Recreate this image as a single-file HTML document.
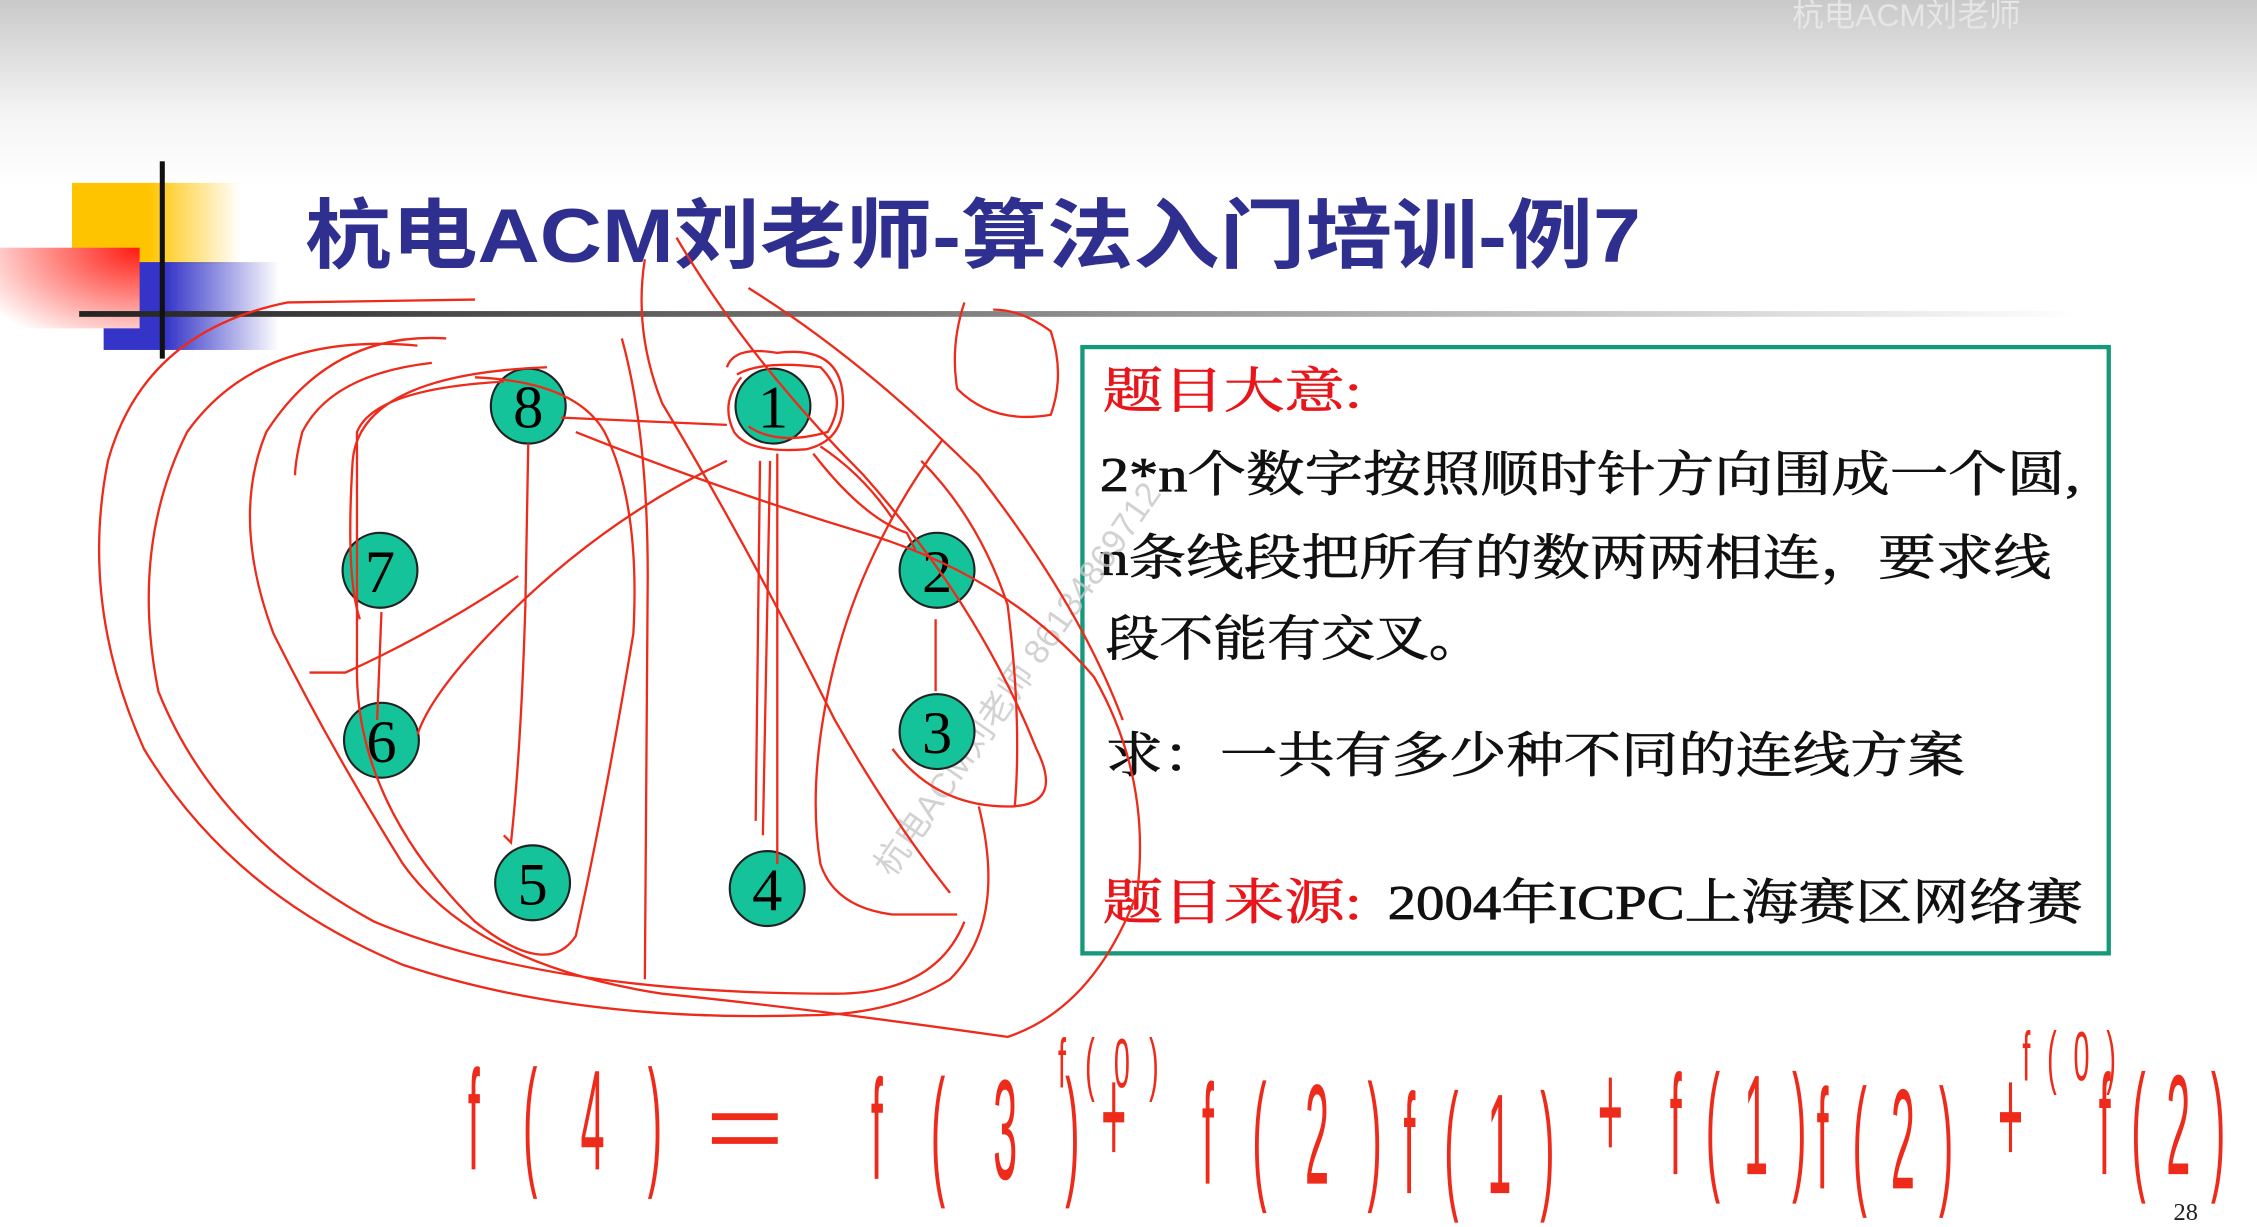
<!DOCTYPE html>
<html><head><meta charset="utf-8"><style>
html,body{margin:0;padding:0;width:2257px;height:1227px;overflow:hidden;background:#fff}
svg{display:block}
</style></head><body>
<svg width="2257" height="1227" viewBox="0 0 1568 852" preserveAspectRatio="none" xmlns="http://www.w3.org/2000/svg">
<defs>
<linearGradient id="bg" x1="0" y1="0" x2="0" y2="1">
<stop offset="0" stop-color="#c9c9c9"/><stop offset="0.6" stop-color="#f4f4f4"/><stop offset="1" stop-color="#ffffff"/></linearGradient>
<linearGradient id="ln" x1="0" y1="0" x2="1" y2="0">
<stop offset="0" stop-color="#222"/><stop offset="0.4" stop-color="#777"/><stop offset="1" stop-color="#fff"/></linearGradient>
<linearGradient id="bl" x1="0" y1="0" x2="1" y2="0">
<stop offset="0.35" stop-color="#3434c8"/><stop offset="1" stop-color="#3434c8" stop-opacity="0"/></linearGradient>
<linearGradient id="ye" x1="0" y1="0" x2="1" y2="0">
<stop offset="0.45" stop-color="#ffc400"/><stop offset="1" stop-color="#ffc400" stop-opacity="0"/></linearGradient>
<radialGradient id="rd" cx="1" cy="0" r="1.3" fx="1" fy="0">
<stop offset="0" stop-color="#ff1a10"/><stop offset="1" stop-color="#ffffff"/></radialGradient>
</defs>
<rect width="1568" height="130" fill="url(#bg)"/>
<text x="1245" y="18" font-family="Liberation Sans,Noto Sans CJK SC,sans-serif" font-size="22" fill="#e6e6e6">杭电ACM刘老师</text>
<rect x="50" y="127" width="117" height="56" fill="url(#ye)"/>
<rect x="72" y="182" width="122" height="61" fill="url(#bl)"/>
<rect x="0" y="172" width="97" height="56" fill="url(#rd)"/>
<rect x="55" y="216" width="1390" height="4" fill="url(#ln)"/>
<rect x="111" y="112" width="3.5" height="137" fill="#111"/>
<text x="212" y="182" font-family="Liberation Sans,Noto Sans CJK SC,sans-serif" font-weight="bold" font-size="53" fill="#2f2f90" textLength="928" lengthAdjust="spacingAndGlyphs">杭电ACM刘老师-算法入门培训-例7</text>
<rect x="752" y="241" width="713" height="421" fill="#fff" stroke="#16987a" stroke-width="3"/>
<g font-family="Liberation Serif,Noto Serif CJK SC,serif" font-size="34" stroke-width="0.5">
<text x="766" y="283" fill="#e8161a" stroke="#e8161a" textLength="180" lengthAdjust="spacingAndGlyphs">题目大意:</text>
<text x="764" y="341" fill="#111" stroke="#111" textLength="681" lengthAdjust="spacingAndGlyphs">2*n个数字按照顺时针方向围成一个圆,</text>
<text x="764" y="399" fill="#111" stroke="#111" textLength="661" lengthAdjust="spacingAndGlyphs">n条线段把所有的数两两相连，要求线</text>
<text x="768" y="455" fill="#111" stroke="#111" textLength="262" lengthAdjust="spacingAndGlyphs">段不能有交叉。</text>
<text x="768" y="536" fill="#111" stroke="#111" textLength="597" lengthAdjust="spacingAndGlyphs">求：一共有多少种不同的连线方案</text>
<text x="766" y="638" fill="#e8161a" stroke="#e8161a" textLength="180" lengthAdjust="spacingAndGlyphs">题目来源:</text>
<text x="964" y="638" fill="#111" stroke="#111" textLength="483" lengthAdjust="spacingAndGlyphs">2004年ICPC上海赛区网络赛</text>
</g>
<text x="0" y="0" transform="translate(620,610) rotate(-55)" font-family="Liberation Sans,Noto Sans CJK SC,sans-serif" font-size="24" fill="#c8c8c8" opacity="0.8">杭电ACM刘老师 86134869712</text>
<g stroke="#222" stroke-width="1.5" fill="#14c39a">
<circle cx="367" cy="282" r="26"/><circle cx="537" cy="282" r="26"/>
<circle cx="264" cy="396" r="26"/><circle cx="651" cy="396" r="26"/>
<circle cx="265" cy="514" r="26"/><circle cx="651" cy="508" r="26"/>
<circle cx="370" cy="613" r="26"/><circle cx="533" cy="617" r="26"/>
</g>
<g font-family="Liberation Serif,serif" font-size="42" fill="#000" text-anchor="middle">
<text x="367" y="297">8</text><text x="537" y="297">1</text>
<text x="264" y="411">7</text><text x="651" y="411">2</text>
<text x="265" y="529">6</text><text x="651" y="523">3</text>
<text x="370" y="628">5</text><text x="533" y="632">4</text>
</g>
<g fill="none" stroke="#ee2a1a" stroke-width="1.6">
<path d="M330 208 L200 210 Q100 230 75 320 Q55 420 100 520 Q160 620 280 670 Q400 710 560 705 Q620 705 660 680 Q700 640 680 560"/>
<path d="M290 240 Q180 230 130 300 Q90 380 110 480 Q150 580 260 640 Q380 690 580 690 Q650 690 670 640"/>
<path d="M310 235 Q230 230 185 300 Q160 360 190 440 Q230 520 280 600 Q330 670 460 690 Q560 700 700 720 Q760 700 790 620 Q800 540 760 470 Q700 400 600 370 Q500 340 400 300"/>
<path d="M300 252 Q230 260 210 300 Q205 320 205 330"/>
<path d="M380 255 Q250 260 245 320 Q240 400 250 430"/>
<path d="M350 265 Q260 270 248 300 L248 470 Q250 560 330 640 Q380 680 400 650 Q420 560 440 440 Q445 350 420 300 Q400 265 330 262"/>
<path d="M367 308 L365 420 Q362 520 355 585 L350 580"/>
<path d="M390 290 L505 295"/>
<path d="M505 320 Q420 360 350 430 Q300 480 290 510"/>
<path d="M215 467 L240 467 Q300 440 360 400"/>
<path d="M265 425 L262 500"/>
<path d="M432 235 Q450 300 450 400 L448 680"/>
<path d="M448 180 Q440 230 460 280 Q520 380 580 500 Q620 570 660 620"/>
<path d="M505 255 Q510 240 540 245 Q580 240 585 270 Q590 305 560 312 Q520 315 510 300 Q500 280 515 262"/>
<path d="M512 260 Q530 250 570 255 Q590 275 575 300 Q540 310 520 296"/>
<path d="M540 315 L540 600 M528 320 L525 570 M535 320 L530 580"/>
<path d="M570 310 Q600 330 620 360 M565 315 Q600 360 630 370 L636 382"/>
<path d="M650 430 L650 480"/>
<path d="M655 305 Q600 380 580 460 Q560 540 570 600 Q580 630 620 635 L665 635"/>
<path d="M640 320 Q680 360 700 420 Q710 500 705 560"/>
<path d="M470 165 Q520 250 600 330 Q680 420 720 520 Q740 560 700 560 Q650 560 620 520"/>
<path d="M520 200 Q600 250 680 330 Q750 420 780 500"/>
<path d="M670 210 Q660 240 665 270 Q690 295 730 288 Q740 260 730 230 Q710 215 690 215"/>
</g>
<g fill="#ee2a1a" font-family="Liberation Sans,DejaVu Sans,sans-serif" font-size="30">
<g transform="translate(0,812) scale(1,3.3)">
<text x="325" y="0" textLength="135" lengthAdjust="spacing">f(4)</text>
<text x="490" y="-2" textLength="55" lengthAdjust="spacingAndGlyphs" font-size="20">=</text>
<text x="605" y="2" textLength="145" lengthAdjust="spacing">f(3)</text>
<text x="765" y="-1" textLength="30" lengthAdjust="spacing">+</text>
<text x="835" y="3" textLength="125" lengthAdjust="spacing">f(2)</text>
<text x="975" y="5" textLength="105" lengthAdjust="spacing">f(1)</text>
<text x="1110" y="-2" textLength="40" lengthAdjust="spacing">+</text>
<text x="1160" y="1" textLength="95" lengthAdjust="spacing">f(1)</text>
<text x="1262" y="4" textLength="95" lengthAdjust="spacing">f(2)</text>
<text x="1388" y="-1" textLength="40" lengthAdjust="spacing">+</text>
<text x="1458" y="1" textLength="88" lengthAdjust="spacing">f(2)</text>
</g>
<g transform="translate(0,755) scale(1,2.4)" font-size="20">
<text x="735" y="0" textLength="70" lengthAdjust="spacing">f(0)</text>
<text x="1405" y="-2" textLength="65" lengthAdjust="spacing">f(0)</text>
</g>
</g>
<text x="1510" y="847" font-family="Liberation Serif,serif" font-size="17" fill="#222">28</text>
</svg>
</body></html>
